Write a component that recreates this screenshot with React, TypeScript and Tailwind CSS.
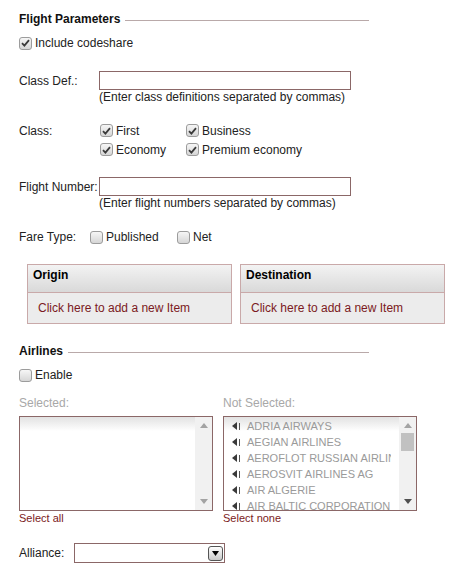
import React from 'react';

function Box({ checked }: { checked?: boolean }) {
  return (
    <span className="inline-flex items-center justify-center w-[13px] h-[13px] shrink-0 rounded-[3px] border border-[#9c9c9c] bg-gradient-to-b from-[#f6f6f6] to-[#d6d6d6]">
      {checked && (
        <svg width="9" height="8" viewBox="0 0 9 8">
          <path d="M1 4.2 L3.4 6.6 L8 1.2" fill="none" stroke="#3a3a3a" strokeWidth="1.8" />
        </svg>
      )}
    </span>
  );
}

function Check({ label, checked, className = '' }: { label: string; checked?: boolean; className?: string }) {
  return (
    <label className={`flex items-center gap-[3px] ${className}`}>
      <Box checked={checked} />
      <span>{label}</span>
    </label>
  );
}

function SectionTitle({ title }: { title: string }) {
  return (
    <div className="flex items-center w-[350px] h-[14px]">
      <span className="font-bold text-[#111]">{title}</span>
      <span className="flex-1 ml-[5px] mt-[3px] h-px bg-[#b9a9a9]" />
    </div>
  );
}

function Panel({ title }: { title: string }) {
  return (
    <div className="w-[205px] border border-[#c9a9a9] bg-[#ececec]">
      <div className="h-[28px] border-b border-[#c9a9a9] bg-gradient-to-b from-[#f3f3f3] to-[#d9d9d9] px-[5px] pt-[3px] font-bold text-black">
        {title}
      </div>
      <div className="h-[30px] flex items-center pl-[10px] text-[#7b1a22]">Click here to add a new Item</div>
    </div>
  );
}

function Scrollbar({ thumb }: { thumb?: boolean }) {
  return (
    <div className="w-[17px] shrink-0 bg-[#f1f1f1] flex flex-col items-center justify-between py-[6px]">
      <div className="flex flex-col items-center w-full">
        <svg width="8" height="5" viewBox="0 0 8 5">
          <path d="M0 5 L4 0 L8 5 Z" fill="#a3a3a3" />
        </svg>
        {thumb && <div className="mt-[5px] w-[13px] h-[18px] bg-[#c1c1c1]" />}
      </div>
      <svg width="8" height="5" viewBox="0 0 8 5">
        <path d="M0 0 L8 0 L4 5 Z" fill={thumb ? '#505050' : '#a3a3a3'} />
      </svg>
    </div>
  );
}

const airlines = [
  'ADRIA AIRWAYS',
  'AEGIAN AIRLINES',
  'AEROFLOT RUSSIAN AIRLINES',
  'AEROSVIT AIRLINES AG',
  'AIR ALGERIE',
  'AIR BALTIC CORPORATION',
];

function ListBox({ items, link }: { items: string[]; link: string }) {
  return (
    <div>
      <div className="w-[194px] h-[95px] border border-[#8b6767] flex overflow-hidden">
        <div className="flex-1 relative overflow-hidden bg-white">
          <div className="absolute inset-x-0 top-0 h-[14px] bg-gradient-to-b from-[#e2e2e2] to-white" />
          <div className="relative pt-[1px] pl-[8px] pr-[8px]">
            {items.map((a) => (
              <div key={a} className="h-[16px] flex items-center whitespace-nowrap overflow-hidden text-[11px] text-[#9a9a9a]">
                <svg width="9" height="8" viewBox="0 0 9 8" className="shrink-0 mr-[6px]">
                  <path d="M0 4 L5 0 L5 8 Z" fill="#3a3a3a" />
                  <rect x="7" y="1" width="1" height="7" fill="#555" />
                </svg>
                <span>{a}</span>
              </div>
            ))}
          </div>
        </div>
        <Scrollbar thumb={items.length > 0} />
      </div>
      <div className="h-[14px] leading-[14px] text-[11px] text-[#7b1a22]">{link}</div>
    </div>
  );
}

export default function App() {
  return (
    <div className="w-[458px] h-[585px] bg-white font-['Liberation_Sans',Arial,sans-serif] text-[12px] leading-[14px] text-[#222] pl-[19px] pt-[12px]">
      <SectionTitle title="Flight Parameters" />
      <Check className="mt-[10px] h-[14px]" label="Include codeshare" checked />

      <div className="mt-[21px] flex items-center">
        <span className="w-[80px]">Class Def.:</span>
        <div className="w-[252px] h-[19px] border border-[#8b6767] bg-white" />
      </div>
      <div className="pl-[80px] h-[14px]">(Enter class definitions separated by commas)</div>

      <div className="mt-[17px] flex">
        <span className="w-[81px] h-[19px] flex items-center">Class:</span>
        <div className="grid grid-cols-[86px_auto]">
          <Check className="h-[19px]" label="First" checked />
          <Check className="h-[19px]" label="Business" checked />
          <Check className="h-[19px]" label="Economy" checked />
          <Check className="h-[19px]" label="Premium economy" checked />
        </div>
      </div>

      <div className="mt-[18px] flex items-center">
        <span className="w-[80px] whitespace-nowrap">Flight Number:</span>
        <div className="w-[252px] h-[19px] border border-[#8b6767] bg-white" />
      </div>
      <div className="pl-[80px] h-[14px]">(Enter flight numbers separated by commas)</div>

      <div className="mt-[20px] flex items-center h-[14px]">
        <span className="w-[71px]">Fare Type:</span>
        <Check className="w-[87px]" label="Published" />
        <Check label="Net" />
      </div>

      <div className="mt-[20px] ml-[8px] flex gap-[8px]">
        <Panel title="Origin" />
        <Panel title="Destination" />
      </div>

      <div className="mt-[20px]">
        <SectionTitle title="Airlines" />
      </div>
      <Check className="mt-[10px] h-[14px]" label="Enable" />

      <div className="mt-[14px] flex gap-[10px]">
        <div>
          <div className="h-[14px] text-[#a8a8a8] mb-[6px]">Selected:</div>
          <ListBox items={[]} link="Select all" />
        </div>
        <div>
          <div className="h-[14px] text-[#a8a8a8] mb-[6px]">Not Selected:</div>
          <ListBox items={airlines} link="Select none" />
        </div>
      </div>

      <div className="mt-[18px] flex items-center">
        <span className="w-[55px]">Alliance:</span>
        <div className="w-[151px] h-[20px] border border-[#8b6767] bg-white flex items-center justify-end pr-[1px]">
          <div className="w-[15px] h-[15px] rounded-[3px] border border-[#555] bg-gradient-to-b from-white to-[#c8c8c8] flex items-center justify-center">
            <svg width="7" height="5" viewBox="0 0 7 5">
              <path d="M0 0 L7 0 L3.5 5 Z" fill="#000" />
            </svg>
          </div>
        </div>
      </div>
    </div>
  );
}
